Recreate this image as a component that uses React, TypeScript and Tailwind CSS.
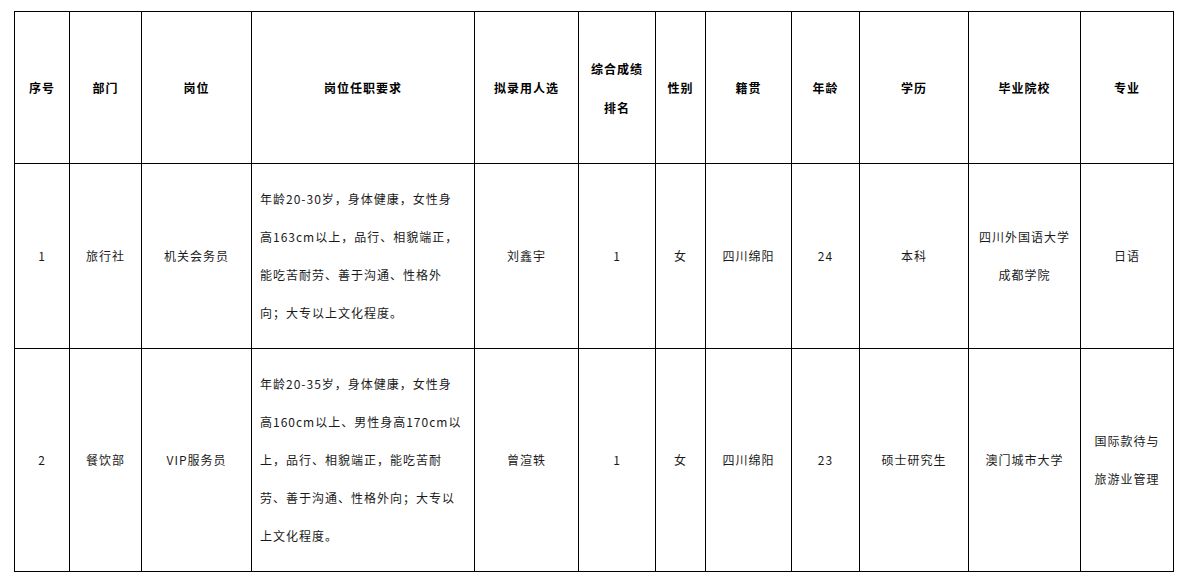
const COLS = [55, 72, 110, 223, 104, 77, 50, 86, 68, 109, 112, 93];

const HEAD: string[][] = [
  ["序号"],
  ["部门"],
  ["岗位"],
  ["岗位任职要求"],
  ["拟录用人选"],
  ["综合成绩", "排名"],
  ["性别"],
  ["籍贯"],
  ["年龄"],
  ["学历"],
  ["毕业院校"],
  ["专业"],
];

const ROWS = [
  {
    h: "h-[185px]",
    cells: [
      ["1"],
      ["旅行社"],
      ["机关会务员"],
      ["年龄20-30岁，身体健康，女性身", "高163cm以上，品行、相貌端正，", "能吃苦耐劳、善于沟通、性格外", "向；大专以上文化程度。"],
      ["刘鑫宇"],
      ["1"],
      ["女"],
      ["四川绵阳"],
      ["24"],
      ["本科"],
      ["四川外国语大学", "成都学院"],
      ["日语"],
    ],
  },
  {
    h: "h-[223px]",
    cells: [
      ["2"],
      ["餐饮部"],
      ["VIP服务员"],
      ["年龄20-35岁，身体健康，女性身", "高160cm以上、男性身高170cm以", "上，品行、相貌端正，能吃苦耐", "劳、善于沟通、性格外向；大专以", "上文化程度。"],
      ["曾渲轶"],
      ["1"],
      ["女"],
      ["四川绵阳"],
      ["23"],
      ["硕士研究生"],
      ["澳门城市大学"],
      ["国际款待与", "旅游业管理"],
    ],
  },
];

export default function App() {
  return (
    <div className="w-[1186px] h-[583px] bg-white pt-[11px] pl-[14px] font-['Noto_Sans_CJK_SC','Noto_Sans',sans-serif] text-[12px] text-[#1a1a1a]">
      <table className="table-fixed border-collapse w-[1159px]">
        <colgroup>
          {COLS.map((w, i) => (
            <col key={i} style={{ width: w }} />
          ))}
        </colgroup>
        <thead>
          <tr className="h-[152px]">
            {HEAD.map((lines, i) => (
              <th key={i} className="border border-black font-bold text-black tracking-[1px] leading-[39px] text-center align-middle">
                {lines.map((l) => (
                  <div key={l}>{l}</div>
                ))}
              </th>
            ))}
          </tr>
        </thead>
        <tbody>
          {ROWS.map((row, r) => (
            <tr key={r} className={row.h}>
              {row.cells.map((lines, i) => (
                <td
                  key={i}
                  className={
                    "border border-black tracking-[1px] leading-[38px] align-middle " +
                    (i === 3 ? "text-left pl-[8px] whitespace-nowrap" : "text-center")
                  }
                >
                  {lines.map((l) => (
                    <div key={l}>{l}</div>
                  ))}
                </td>
              ))}
            </tr>
          ))}
        </tbody>
      </table>
    </div>
  );
}
